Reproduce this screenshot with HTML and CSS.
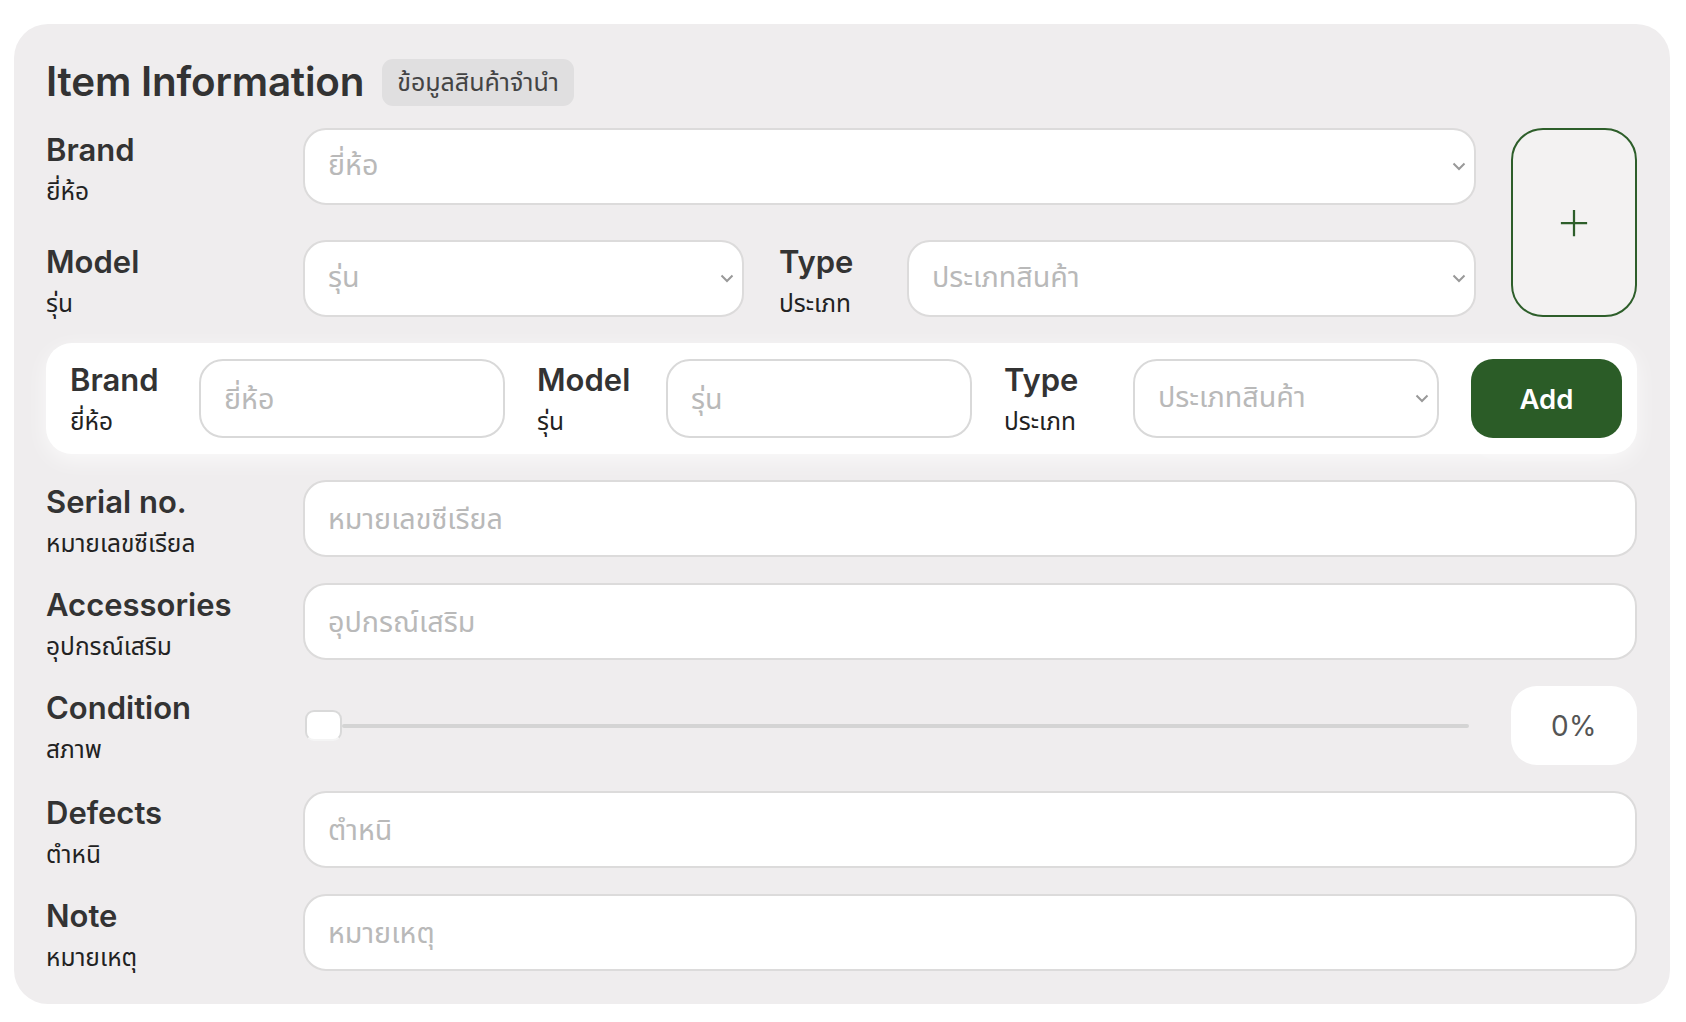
FILE: index.html
```html
<!DOCTYPE html>
<html lang="th">
<head>
<meta charset="utf-8">
<title>Item Information</title>
<link rel="stylesheet" href="styles.css">
</head>
<body>
<div class="card">
  <div class="header">
    <h1 class="title">Item Information</h1>
    <span class="badge">ข้อมูลสินค้าจำนำ</span>
  </div>

  <div class="rows">
    <div class="top-block">
      <div class="top-fields">
        <div class="row">
          <div class="label"><div class="main">Brand</div><div class="sub">ยี่ห้อ</div></div>
          <div class="select"><span>ยี่ห้อ</span><svg class="chev" viewBox="0 0 14 9"><path d="M1.5 1.5 L7 7 L12.5 1.5"/></svg></div>
        </div>
        <div class="row row-model">
          <div class="label"><div class="main">Model</div><div class="sub">รุ่น</div></div>
          <div class="select"><span>รุ่น</span><svg class="chev" viewBox="0 0 14 9"><path d="M1.5 1.5 L7 7 L12.5 1.5"/></svg></div>
          <div class="label label-type"><div class="main">Type</div><div class="sub">ประเภท</div></div>
          <div class="select"><span>ประเภทสินค้า</span><svg class="chev" viewBox="0 0 14 9"><path d="M1.5 1.5 L7 7 L12.5 1.5"/></svg></div>
        </div>
      </div>
      <button class="plus-btn" type="button" aria-label="add">
        <svg viewBox="0 0 32 32"><path d="M16 2 V30 M2 16 H30"/></svg>
      </button>
    </div>

    <div class="add-panel">
      <div class="label"><div class="main">Brand</div><div class="sub">ยี่ห้อ</div></div>
      <input class="field" placeholder="ยี่ห้อ">
      <div class="label"><div class="main">Model</div><div class="sub">รุ่น</div></div>
      <input class="field" placeholder="รุ่น">
      <div class="label"><div class="main">Type</div><div class="sub">ประเภท</div></div>
      <div class="select"><span>ประเภทสินค้า</span><svg class="chev" viewBox="0 0 14 9"><path d="M1.5 1.5 L7 7 L12.5 1.5"/></svg></div>
      <button class="add-btn" type="button">Add</button>
    </div>

    <div class="row">
      <div class="label"><div class="main">Serial no.</div><div class="sub">หมายเลขซีเรียล</div></div>
      <input class="field" placeholder="หมายเลขซีเรียล">
    </div>

    <div class="row">
      <div class="label"><div class="main">Accessories</div><div class="sub">อุปกรณ์เสริม</div></div>
      <input class="field" placeholder="อุปกรณ์เสริม">
    </div>

    <div class="row row-cond">
      <div class="label"><div class="main">Condition</div><div class="sub">สภาพ</div></div>
      <div class="slider">
        <div class="thumb"></div>
        <div class="track"></div>
      </div>
      <div class="pct">0%</div>
    </div>

    <div class="row">
      <div class="label"><div class="main">Defects</div><div class="sub">ตำหนิ</div></div>
      <input class="field" placeholder="ตำหนิ">
    </div>

    <div class="row">
      <div class="label"><div class="main">Note</div><div class="sub">หมายเหตุ</div></div>
      <input class="field" placeholder="หมายเหตุ">
    </div>
  </div>
</div>
</body>
</html>
```

FILE: styles.css
```css
* { box-sizing: border-box; }

html, body {
  margin: 0;
  padding: 0;
  background: #ffffff;
}

body {
  font-family: Inter, "Noto Sans Thai", "Noto Sans", sans-serif;
  color: #333333;
  padding: 24px 16px 16px 14px;
}

.card {
  background: #efedee;
  border-radius: 34px;
  padding: 34px 33px 33px 32px;
  width: 1656px;
}

.header {
  display: flex;
  align-items: center;
  gap: 18px;
  height: 49px;
  margin-bottom: 21px;
}

.title {
  margin: 0;
  font-size: 40.4px;
  font-weight: 600;
  color: #333333;
  letter-spacing: -0.2px;
  line-height: 1;
}

.badge {
  display: inline-flex;
  align-items: center;
  height: 47px;
  padding: 0 15px;
  background: #e0dfe0;
  border-radius: 11px;
  font-size: 25px;
  color: #444444;
}

.rows {
  display: flex;
  flex-direction: column;
  gap: 26px;
}

.top-block {
  display: flex;
  gap: 35px;
}

.top-fields {
  flex: 1;
  display: flex;
  flex-direction: column;
  gap: 35px;
}

.row {
  display: grid;
  grid-template-columns: 257px 1fr;
  align-items: start;
}

.row-model {
  grid-template-columns: 257px 441px 163px 1fr;
}

.label-type {
  padding-left: 35px;
}

.label {
  padding-top: 3px;
}

.label .main {
  font-size: 31px;
  font-weight: 600;
  line-height: 38px;
  color: #333333;
}

.label .sub {
  font-size: 24.5px;
  line-height: 27px;
  margin-top: 9px;
  color: #222222;
}

.select,
.field {
  height: 77px;
  background: #ffffff;
  border: 2px solid #dcdbdb;
  border-radius: 23px;
  font-family: inherit;
  font-size: 28.7px;
  color: #333333;
  padding: 0 8px 0 23px;
  width: 100%;
}

.field::placeholder {
  color: #b9b9b9;
}

.field:focus { outline: none; }

.select {
  display: flex;
  align-items: center;
  justify-content: space-between;
  color: #b9b9b9;
}

.chev {
  width: 14px;
  height: 9px;
  fill: none;
  stroke: #999999;
  stroke-width: 2;
}

.plus-btn {
  width: 126px;
  flex: 0 0 126px;
  background: #f3f2f2;
  border: 2px solid #2d5e2a;
  border-radius: 32px;
  display: flex;
  align-items: center;
  justify-content: center;
  padding: 0;
}

.plus-btn svg {
  width: 30px;
  height: 30px;
  fill: none;
  stroke: #2d5e2a;
  stroke-width: 2.4;
}

.add-panel {
  display: grid;
  grid-template-columns: 97px 1fr 97px 1fr 97px 1fr 151px;
  column-gap: 32px;
  align-items: start;
  background: #ffffff;
  border-radius: 26px;
  padding: 16px 15px 16px 24px;
  box-shadow: 0 6px 22px rgba(255, 255, 255, 0.7);
}

.add-panel .label {
  padding-top: 2px;
}

.add-panel .field,
.add-panel .select {
  height: 79px;
  border-radius: 24px;
  border-color: #d9d9d9;
}

.add-btn {
  height: 79px;
  border: none;
  border-radius: 22px;
  background: #2b5c27;
  color: #ffffff;
  font-family: inherit;
  font-size: 27.5px;
  font-weight: 600;
  box-shadow: 0 10px 24px rgba(255, 255, 255, 0.6);
}

.row-cond {
  grid-template-columns: 257px 1fr 126px;
  column-gap: 0;
}

.slider {
  display: flex;
  align-items: center;
  height: 79px;
  padding-left: 2px;
  margin-right: 42px;
}

.thumb {
  width: 37px;
  height: 31px;
  background: #ffffff;
  border: 2px solid #d9d9d9;
  border-bottom-color: #f4f4f4;
  border-radius: 9px;
  flex: 0 0 37px;
}

.track {
  flex: 1;
  height: 4px;
  background: #d4d4d4;
  border-radius: 2px;
}

.pct {
  height: 79px;
  background: #ffffff;
  border-radius: 26px;
  display: flex;
  align-items: center;
  justify-content: center;
  font-size: 28px;
  color: #555555;
  letter-spacing: 0.5px;
}
```
